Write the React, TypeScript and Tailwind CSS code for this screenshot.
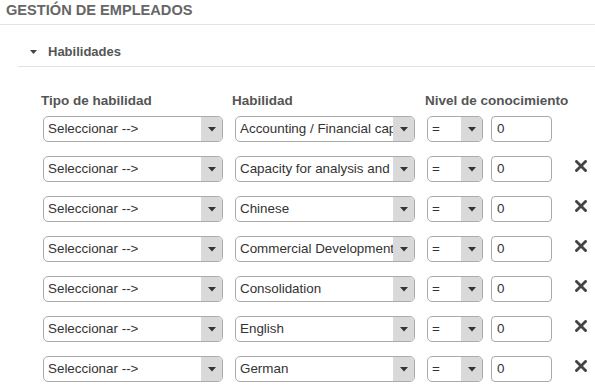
import React from 'react'

const rows = [
  { skill: 'Accounting / Financial capacity', remove: false },
  { skill: 'Capacity for analysis and synthesis', remove: true },
  { skill: 'Chinese', remove: true },
  { skill: 'Commercial Development', remove: true },
  { skill: 'Consolidation', remove: true },
  { skill: 'English', remove: true },
  { skill: 'German', remove: true },
]

function Caret() {
  return (
    <svg width="8" height="5" viewBox="0 0 8 5">
      <path d="M0 0 L8 0 L4 4.5 Z" fill="#333" />
    </svg>
  )
}

function SelectBox({ value, width }: { value: string; width: string }) {
  return (
    <div className={`${width} h-[26px] flex border border-[#aaa] rounded-[5px] overflow-hidden bg-white`}>
      <div className="flex-1 min-w-0 pl-[4px] flex items-center overflow-hidden whitespace-nowrap text-[13.4px] text-[#333]">
        {value}
      </div>
      <div className="w-[21px] shrink-0 bg-[#d9d9d9] flex items-center justify-center">
        <Caret />
      </div>
    </div>
  )
}

export default function App() {
  return (
    <div className="w-[595px] h-[385px] bg-white overflow-hidden" style={{ fontFamily: '"Liberation Sans", Arial, sans-serif' }}>
      <div className="h-[25px] pt-[2px] pl-[6px] border-b border-[#e3e3e3] text-[14.6px] leading-[17px] font-bold text-[#666]">
        GESTIÓN DE EMPLEADOS
      </div>

      <div className="ml-[18px] mt-[19px] h-[23px] border-b border-[#e3e3e3] flex items-start">
        <div className="w-[30px] h-[15px] flex items-center pl-[12px]">
          <svg width="7" height="4" viewBox="0 0 7 4">
            <path d="M0 0 L7 0 L3.5 4 Z" fill="#444" />
          </svg>
        </div>
        <span className="text-[13px] leading-[15px] font-bold text-[#555]">Habilidades</span>
      </div>

      <div className="mt-[26px] pl-[41px] flex text-[13.5px] leading-[15px] font-bold text-[#555]">
        <div className="w-[191px]">Tipo de habilidad</div>
        <div className="w-[193px]">Habilidad</div>
        <div>Nivel de conocimiento</div>
      </div>

      <div className="mt-[8px] pl-[43px] flex flex-col gap-[14px]">
        {rows.map((r) => (
          <div key={r.skill} className="flex items-start">
            <SelectBox value="Seleccionar -->" width="w-[180px]" />
            <div className="ml-[12px]">
              <SelectBox value={r.skill} width="w-[180px]" />
            </div>
            <div className="ml-[12px]">
              <SelectBox value="=" width="w-[56px]" />
            </div>
            <div className="ml-[8px] w-[61px] h-[26px] border border-[#aaa] rounded-[4px] pl-[5px] flex items-center text-[13.4px] text-[#333]">
              0
            </div>
            {r.remove && (
              <div className="ml-[23px] mt-[4px] w-[12px] h-[12px]">
                <svg width="12" height="12" viewBox="0 0 12 12">
                  <path d="M1.5 1.5 L10.5 10.5 M10.5 1.5 L1.5 10.5" stroke="#444" strokeWidth="2.8" strokeLinecap="square" />
                </svg>
              </div>
            )}
          </div>
        ))}
      </div>
    </div>
  )
}
